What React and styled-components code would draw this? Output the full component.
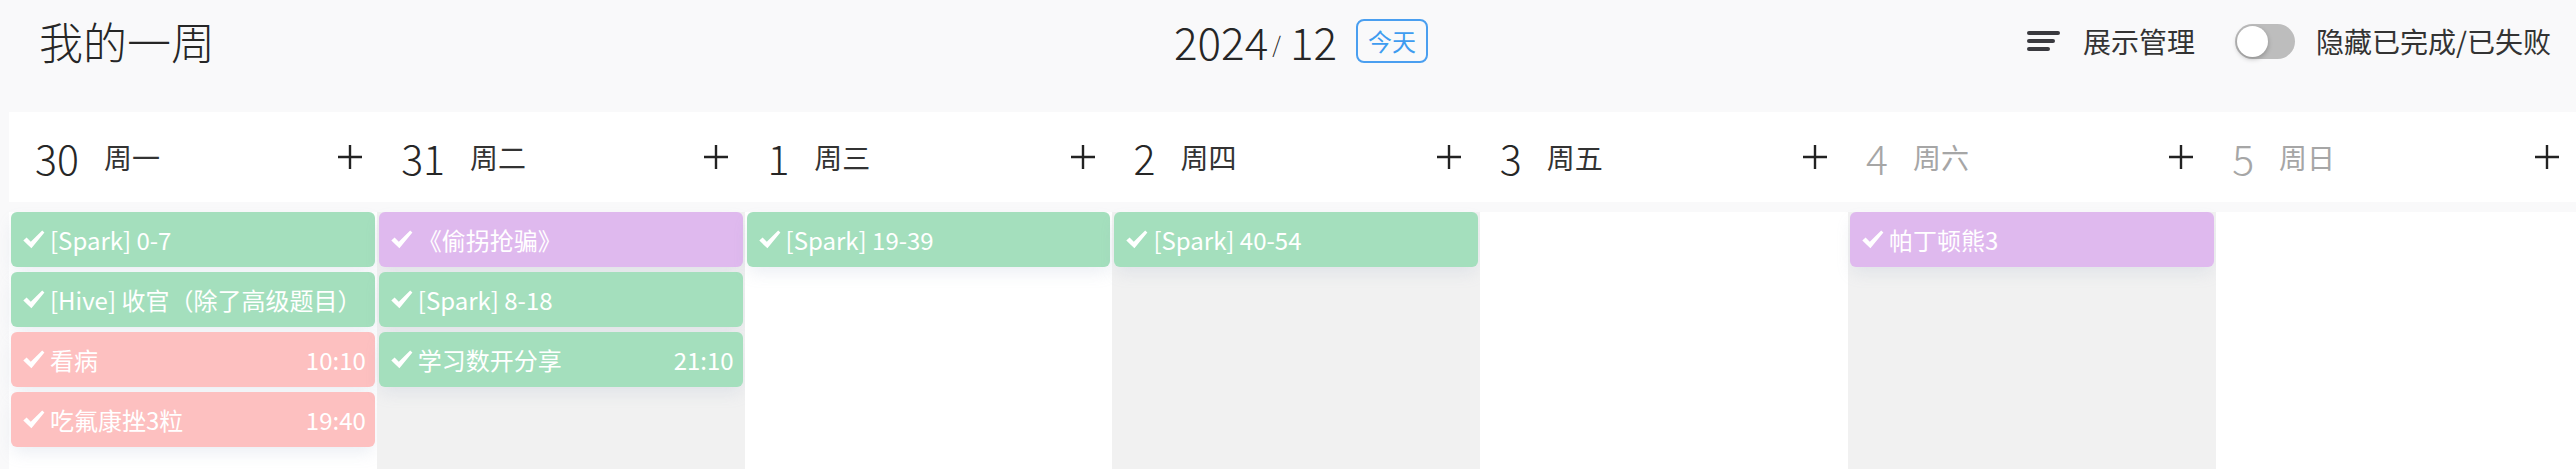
import React from 'react'
import styled, { createGlobalStyle } from "styled-components";

const GlobalStyle = createGlobalStyle`
    html, body {
        margin: 0;
        padding: 0;
        background: #f9f9fa;
        font-family: "Noto Sans CJK SC", "Noto Sans", sans-serif;
        color: #262626;
        overflow: hidden;
    }
`

const days = [
    { num: 30, name: "周一", events: [
        { title: "[Spark] 0-7", kind: "green" },
        { title: "[Hive] 收官（除了高级题目）", kind: "green" },
        { title: "看病", kind: "red", time: "10:10" },
        { title: "吃氟康挫3粒", kind: "red", time: "19:40" },
    ] },
    { num: 31, name: "周二", events: [
        { title: "《偷拐抢骗》", kind: "purple" },
        { title: "[Spark] 8-18", kind: "green" },
        { title: "学习数开分享", kind: "green", time: "21:10" },
    ] },
    { num: 1, name: "周三", events: [
        { title: "[Spark] 19-39", kind: "green" },
    ] },
    { num: 2, name: "周四", events: [
        { title: "[Spark] 40-54", kind: "green" },
    ] },
    { num: 3, name: "周五", events: [] },
    { num: 4, name: "周六", weekend: true, events: [
        { title: "帕丁顿熊3", kind: "purple" },
    ] },
    { num: 5, name: "周日", weekend: true, events: [] },
]

const cardColors = {
    green: "#a4dfbd",
    purple: "#dfb9ee",
    red: "#fdc0c0",
}

function MenuIcon() {
    return (
        <svg width="33" height="20" viewBox="0 0 33 20">
            <rect x="0" y="0" width="33" height="4" rx="2" fill="#3a3a3f" />
            <rect x="0" y="8" width="28" height="4" rx="2" fill="#3a3a3f" />
            <rect x="0" y="16" width="23" height="4" rx="2" fill="#3a3a3f" />
        </svg>
    )
}

function PlusIcon() {
    return (
        <svg width="24" height="24" viewBox="0 0 24 24">
            <path d="M12 0 V24 M0 12 H24" stroke="#222" strokeWidth="2.4" />
        </svg>
    )
}

function CheckIcon() {
    return (
        <svg width="22" height="19" viewBox="0 0 22 19">
            <path d="M0.3 10.6 L3.6 7.6 L7.8 11.8 L19.2 0.6 L21.4 2.6 L8.4 18.2 Z" fill="#fff" />
        </svg>
    )
}

function App() {
    return (
        <Page>
            <GlobalStyle />
            <TopBar>
                <Title>我的一周</Title>
                <MonthGroup>
                    <Month>2024<Slash>/</Slash>12</Month>
                    <TodayButton>今天</TodayButton>
                </MonthGroup>
                <Tools>
                    <ToolButton>
                        <MenuIcon />
                        <span>展示管理</span>
                    </ToolButton>
                    <Toggle>
                        <Thumb />
                    </Toggle>
                    <ToolLabel>隐藏已完成/已失败</ToolLabel>
                </Tools>
            </TopBar>

            <DayHeader>
                {days.map(d => (
                    <DayHead key={d.num}>
                        <DayNum $muted={d.weekend}>{d.num}</DayNum>
                        <DayName $muted={d.weekend}>{d.name}</DayName>
                        <AddButton><PlusIcon /></AddButton>
                    </DayHead>
                ))}
            </DayHeader>

            <Board>
                {days.map((d, i) => (
                    <Column key={d.num} $shaded={i % 2 === 1}>
                        {d.events.map((e, j) => (
                            <Card key={j} $color={cardColors[e.kind]}>
                                <CheckIcon />
                                <CardTitle>{e.title}</CardTitle>
                                {e.time && <CardTime>{e.time}</CardTime>}
                            </Card>
                        ))}
                    </Column>
                ))}
            </Board>
        </Page>
    )
}

const Page = styled.div`
    height: 100vh;
    display: flex;
    flex-direction: column;
    overflow: hidden;
`

const TopBar = styled.header`
    height: 82px;
    flex-shrink: 0;
    display: grid;
    grid-template-columns: 1fr auto 1fr;
    align-items: center;
    padding: 0 25px 0 39px;
    margin-bottom: 30px;
`

const Title = styled.h1`
    margin: 0;
    font-size: 44px;
    font-weight: 300;
    line-height: 1;
    color: #262626;
`

const MonthGroup = styled.div`
    display: flex;
    align-items: center;
    padding-left: 12px;
`

const Month = styled.div`
    font-size: 44px;
    font-weight: 300;
    line-height: 1;
    color: #262626;
    display: flex;
    align-items: center;
`

const Slash = styled.span`
    font-size: 22px;
    margin: 4px 9px 0 4px;
`

const TodayButton = styled.button`
    margin-left: 19px;
    width: 72px;
    height: 44px;
    border: 2px solid #4a9ff0;
    border-radius: 8px;
    background: transparent;
    color: #3e9cf0;
    font-family: inherit;
    font-size: 24px;
    line-height: 1;
    padding: 0;
`

const Tools = styled.div`
    justify-self: end;
    display: flex;
    align-items: center;
`

const ToolButton = styled.div`
    display: flex;
    align-items: center;
    gap: 23px;
    font-size: 28px;
    color: #333;
`

const Toggle = styled.div`
    position: relative;
    margin-left: 40px;
    width: 60px;
    height: 35px;
    border-radius: 18px;
    background: #bdbdbd;
`

const Thumb = styled.div`
    position: absolute;
    left: 2px;
    top: 2px;
    width: 31px;
    height: 31px;
    border-radius: 50%;
    background: #fff;
    box-shadow: 0 2px 5px rgba(0, 0, 0, 0.25);
`

const ToolLabel = styled.span`
    margin-left: 21px;
    font-size: 28px;
    color: #333;
`

const DayHeader = styled.div`
    margin-left: 9px;
    height: 90px;
    flex-shrink: 0;
    background: #fff;
    display: grid;
    grid-template-columns: repeat(7, 366.2px);
    align-items: center;
`

const DayHead = styled.div`
    display: flex;
    align-items: center;
    padding: 0 13px 0 26px;
`

const DayNum = styled.span`
    font-size: 41px;
    font-weight: 300;
    line-height: 1;
    color: ${p => (p.$muted ? "#a6a6a6" : "#262626")};
`

const DayName = styled.span`
    margin-left: 25px;
    font-size: 28px;
    color: ${p => (p.$muted ? "#a6a6a6" : "#333")};
`

const AddButton = styled.span`
    margin-left: auto;
    display: flex;
`

const Board = styled.div`
    flex: 1;
    margin: 10px 0 0 9px;
    display: grid;
    grid-template-columns: repeat(7, 367.8px);
`

const Column = styled.div`
    background: ${p => (p.$shaded ? "#f1f1f1" : "#fff")};
    padding: 0 2px;
    display: flex;
    flex-direction: column;
    gap: 5px;
`

const Card = styled.div`
    height: 55px;
    flex-shrink: 0;
    border-radius: 6px;
    background: ${p => p.$color};
    box-shadow: 0 8px 16px -2px rgba(150, 165, 195, 0.18);
    display: flex;
    align-items: center;
    padding: 0 9px 0 12px;
    color: #fff;
    font-size: 24px;
    svg {
        flex-shrink: 0;
        margin-right: 5px;
    }
`

const CardTitle = styled.span`
    flex: 1;
    white-space: nowrap;
    overflow: hidden;
`

const CardTime = styled.span`
    margin-left: 8px;
`

export default App
